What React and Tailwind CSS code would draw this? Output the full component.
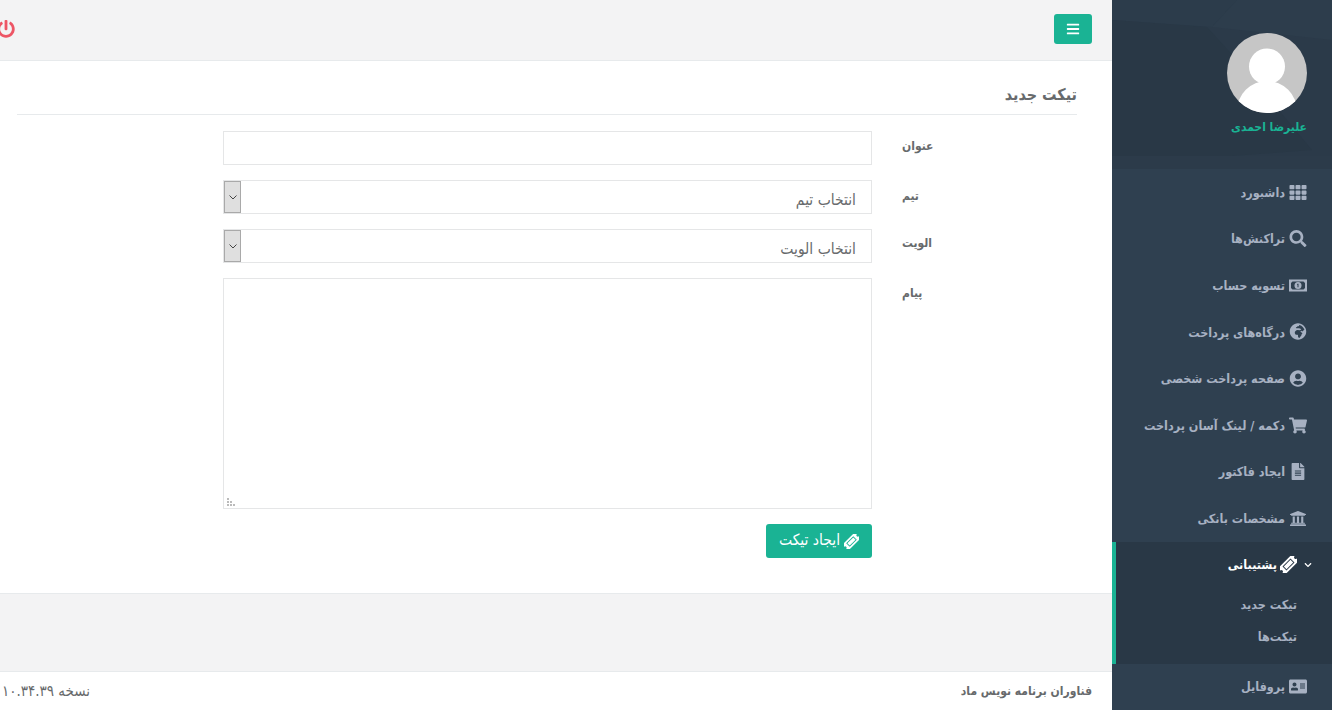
import React from "react";
import {
  FaBars,
  FaPowerOff,
  FaTh,
  FaSearch,
  FaGlobeAfrica,
  FaUserCircle,
  FaShoppingCart,
  FaFileAlt,
  FaUniversity,
  FaAddressCard,
  FaChevronDown,
} from "react-icons/fa";

const MoneyIcon = ({ className }) => (
  <svg viewBox="0 0 18 14" className={className}>
    <path
      fillRule="evenodd"
      fill="currentColor"
      d="M0 1h18v12H0zM3.5 3 2 4.5v5L3.500 11h11l1.500-1.500v-5L14.500 3z"
    />
    <circle cx="9" cy="7" r="3.500" fill="currentColor" />
    <path d="M8.300 5.200h1.200v3.600H8.500V6.300l-.6.300z" fill="#2f4050" />
  </svg>
);

// old font awesome ticket, long and thin on the diagonal
const TicketIcon = ({ className }) => (
  <svg viewBox="0 0 18 18" className={className}>
    <g transform="rotate(-45 9 9)">
      <path
        fillRule="evenodd"
        fill="currentColor"
        d="M-1.500 4h21v3.500a1.500 1.500 0 0 0 0 3V14h-21v-3.500a1.500 1.500 0 0 0 0-3zM3 6v6h12V6z"
      />
      <rect x="4" y="7" width="10" height="4" fill="currentColor" />
    </g>
  </svg>
);

const topItems = [
  { label: "داشبورد", icon: FaTh },
  { label: "تراکنش‌ها", icon: FaSearch },
  { label: "تسویه حساب", icon: MoneyIcon },
  { label: "درگاه‌های پرداخت", icon: FaGlobeAfrica },
  { label: "صفحه پرداخت شخصی", icon: FaUserCircle },
  { label: "دکمه / لینک آسان پرداخت", icon: FaShoppingCart },
  { label: "ایجاد فاکتور", icon: FaFileAlt },
  { label: "مشخصات بانکی", icon: FaUniversity },
];

const NavItem = ({ label, icon: Icon }) => (
  <a className="flex h-[46.57px] items-center gap-[4px] pr-[25px] text-[12.500px] font-bold text-[#a7b1c2]">
    <Icon className="h-[17px] w-[18px] shrink-0" />
    <span className="pt-[2px]">{label}</span>
  </a>
);

const Avatar = () => (
  <svg viewBox="0 0 80 80" className="relative h-20 w-20">
    <defs>
      <clipPath id="avatarClip">
        <circle cx="40" cy="40" r="40" />
      </clipPath>
    </defs>
    <circle cx="40" cy="40" r="40" fill="#c6c6c6" />
    <g clipPath="url(#avatarClip)" fill="#fff">
      <circle cx="40" cy="33.500" r="18" />
      <ellipse cx="40" cy="78" rx="30" ry="30" />
    </g>
  </svg>
);

const Sidebar = () => (
  <aside className="w-[220px] shrink-0 bg-[#2f4050]">
    {/* profile header */}
    <div className="relative h-[169px] overflow-hidden bg-[#2b3a49] pr-[25px] pt-[33px]">
      <svg viewBox="0 0 220 169" className="absolute inset-0 h-full w-full">
        <polygon points="0,0 125,0 100,27 0,20" fill="#2c3c4b" />
        <polygon points="125,0 220,0 220,40 100,27" fill="#2d3d4c" />
        <polygon points="0,20 95,27 125,60 200,150 120,156 0,156" fill="#293846" />
        <polygon points="0,156 220,156 220,169 0,169" fill="#2c3b4a" />
      </svg>
      <Avatar />
      <div className="relative mt-[5px] text-[12px] font-bold text-[#1ab394]">
        علیرضا احمدی
      </div>
    </div>

    <nav>
      {topItems.map((item) => (
        <NavItem key={item.label} {...item} />
      ))}

      {/* active section */}
      <div className="h-[122px] border-l-4 border-[#1ab394] bg-[#293846]">
        <a className="flex h-[46.57px] items-center pr-[20px] text-[12.500px] font-bold text-white">
          <FaChevronDown className="ml-[7px] h-2 w-2" />
          <TicketIcon className="ml-[3px] h-[17px] w-[17px]" />
          <span className="pt-[2px]">پشتیبانی</span>
        </a>
        <a className="flex h-[32px] items-center pr-[35px] pt-[2px] text-[12.500px] font-bold text-[#a7b1c2]">
          تیکت جدید
        </a>
        <a className="flex h-[32px] items-center pr-[35px] pt-[2px] text-[12.500px] font-bold text-[#a7b1c2]">
          تیکت‌ها
        </a>
      </div>

      <NavItem label="پروفایل" icon={FaAddressCard} />
    </nav>
  </aside>
);

const Row = ({ label, labelClass, children }) => (
  <div className="mb-[15px] flex">
    <label className={`w-[205px] shrink-0 pl-[30px] text-left text-[12px] font-bold ${labelClass}`}>
      {label}
    </label>
    <div className="relative w-[649px]">{children}</div>
  </div>
);

const fieldClass =
  "block w-full border border-[#e5e6e7] bg-white px-3 text-[13px] text-[#676a6c] outline-none";

// grey windows style drop button seen on the selects
const SelectField = ({ text }) => (
  <>
    <select className={`${fieldClass} h-[34px] appearance-none pr-[15px] pt-[7px] text-[15.500px]`}>
      <option>{text}</option>
    </select>
    <div className="absolute left-[1px] top-[1px] flex h-[32px] w-[17px] items-center justify-center border border-[#a9a9a9] bg-[#dfdfdf]">
      <svg viewBox="0 0 8 5" className="h-[5px] w-[8px]">
        <path d="M.5.5 4 4 7.500.5" fill="none" stroke="#444" strokeWidth="1" />
      </svg>
    </div>
  </>
);

const TicketForm = () => (
  <section className="h-[532px] bg-white pl-[17px] pr-[35px]">
    <h2 className="flex h-[54px] items-center border-b border-[#e7eaec] pt-[14px] text-[16px] font-bold text-[#676a6c]">
      تیکت جدید
    </h2>
    <form className="pt-[16px]">
      <Row label="عنوان" labelClass="pt-[6px]">
        <input className={`${fieldClass} h-[34px]`} />
      </Row>
      <Row label="تیم" labelClass="pt-[7px]">
        <SelectField text="انتخاب تیم" />
      </Row>
      <Row label="الویت" labelClass="pt-[5px]">
        <SelectField text="انتخاب الویت" />
      </Row>
      <Row label="پیام" labelClass="pt-[6px]">
        <textarea className={`${fieldClass} h-[231px] resize-none`} />
        <svg viewBox="0 0 8 8" className="absolute bottom-[3px] left-[4px] h-2 w-2" fill="#bbb">
          <rect x="0" y="0" width="2" height="2" />
          <rect x="0" y="3" width="2" height="2" />
          <rect x="3" y="3" width="2" height="2" />
          <rect x="0" y="6" width="2" height="2" />
          <rect x="3" y="6" width="2" height="2" />
          <rect x="6" y="6" width="2" height="2" />
        </svg>
      </Row>
      <div className="pr-[205px]">
        <button
          type="button"
          className="flex h-[34px] w-[106px] items-center justify-center gap-[4px] rounded-[3px] bg-[#1ab394] text-[15.500px] text-white"
        >
          <TicketIcon className="h-[15px] w-[15px]" />
          <span>ایجاد تیکت</span>
        </button>
      </div>
    </form>
  </section>
);

export default function App() {
  return (
    <div
      dir="rtl"
      className="flex h-screen overflow-hidden bg-[#f3f3f4] text-[#676a6c] [font-family:'DejaVu_Sans_Condensed','DejaVu_Sans',sans-serif] font-stretch-condensed"
    >
      <Sidebar />
      <main className="flex min-w-0 flex-1 flex-col">
        <header className="flex h-[61px] shrink-0 items-center justify-between border-b border-[#e7eaec] pr-5">
          <button
            type="button"
            className="-mt-[2px] flex h-[30px] w-[38px] items-center justify-center rounded-[3px] bg-[#1ab394] text-white"
          >
            <FaBars className="h-[14px] w-[14px]" />
          </button>
          <FaPowerOff className="-ml-[3px] -mt-[2px] h-[18px] w-[18px] text-[#ed5565]" />
        </header>

        <TicketForm />

        <div className="flex-1 border-t border-[#e7eaec]" />

        <footer className="flex h-[39px] shrink-0 items-center justify-between border-t border-[#e7eaec] bg-white pl-[2px] pr-5">
          <strong className="text-[12px]">فناوران برنامه نویس ماد</strong>
          <span className="text-[15px]">نسخه ۱۰.۳۴.۳۹</span>
        </footer>
      </main>
    </div>
  );
}
